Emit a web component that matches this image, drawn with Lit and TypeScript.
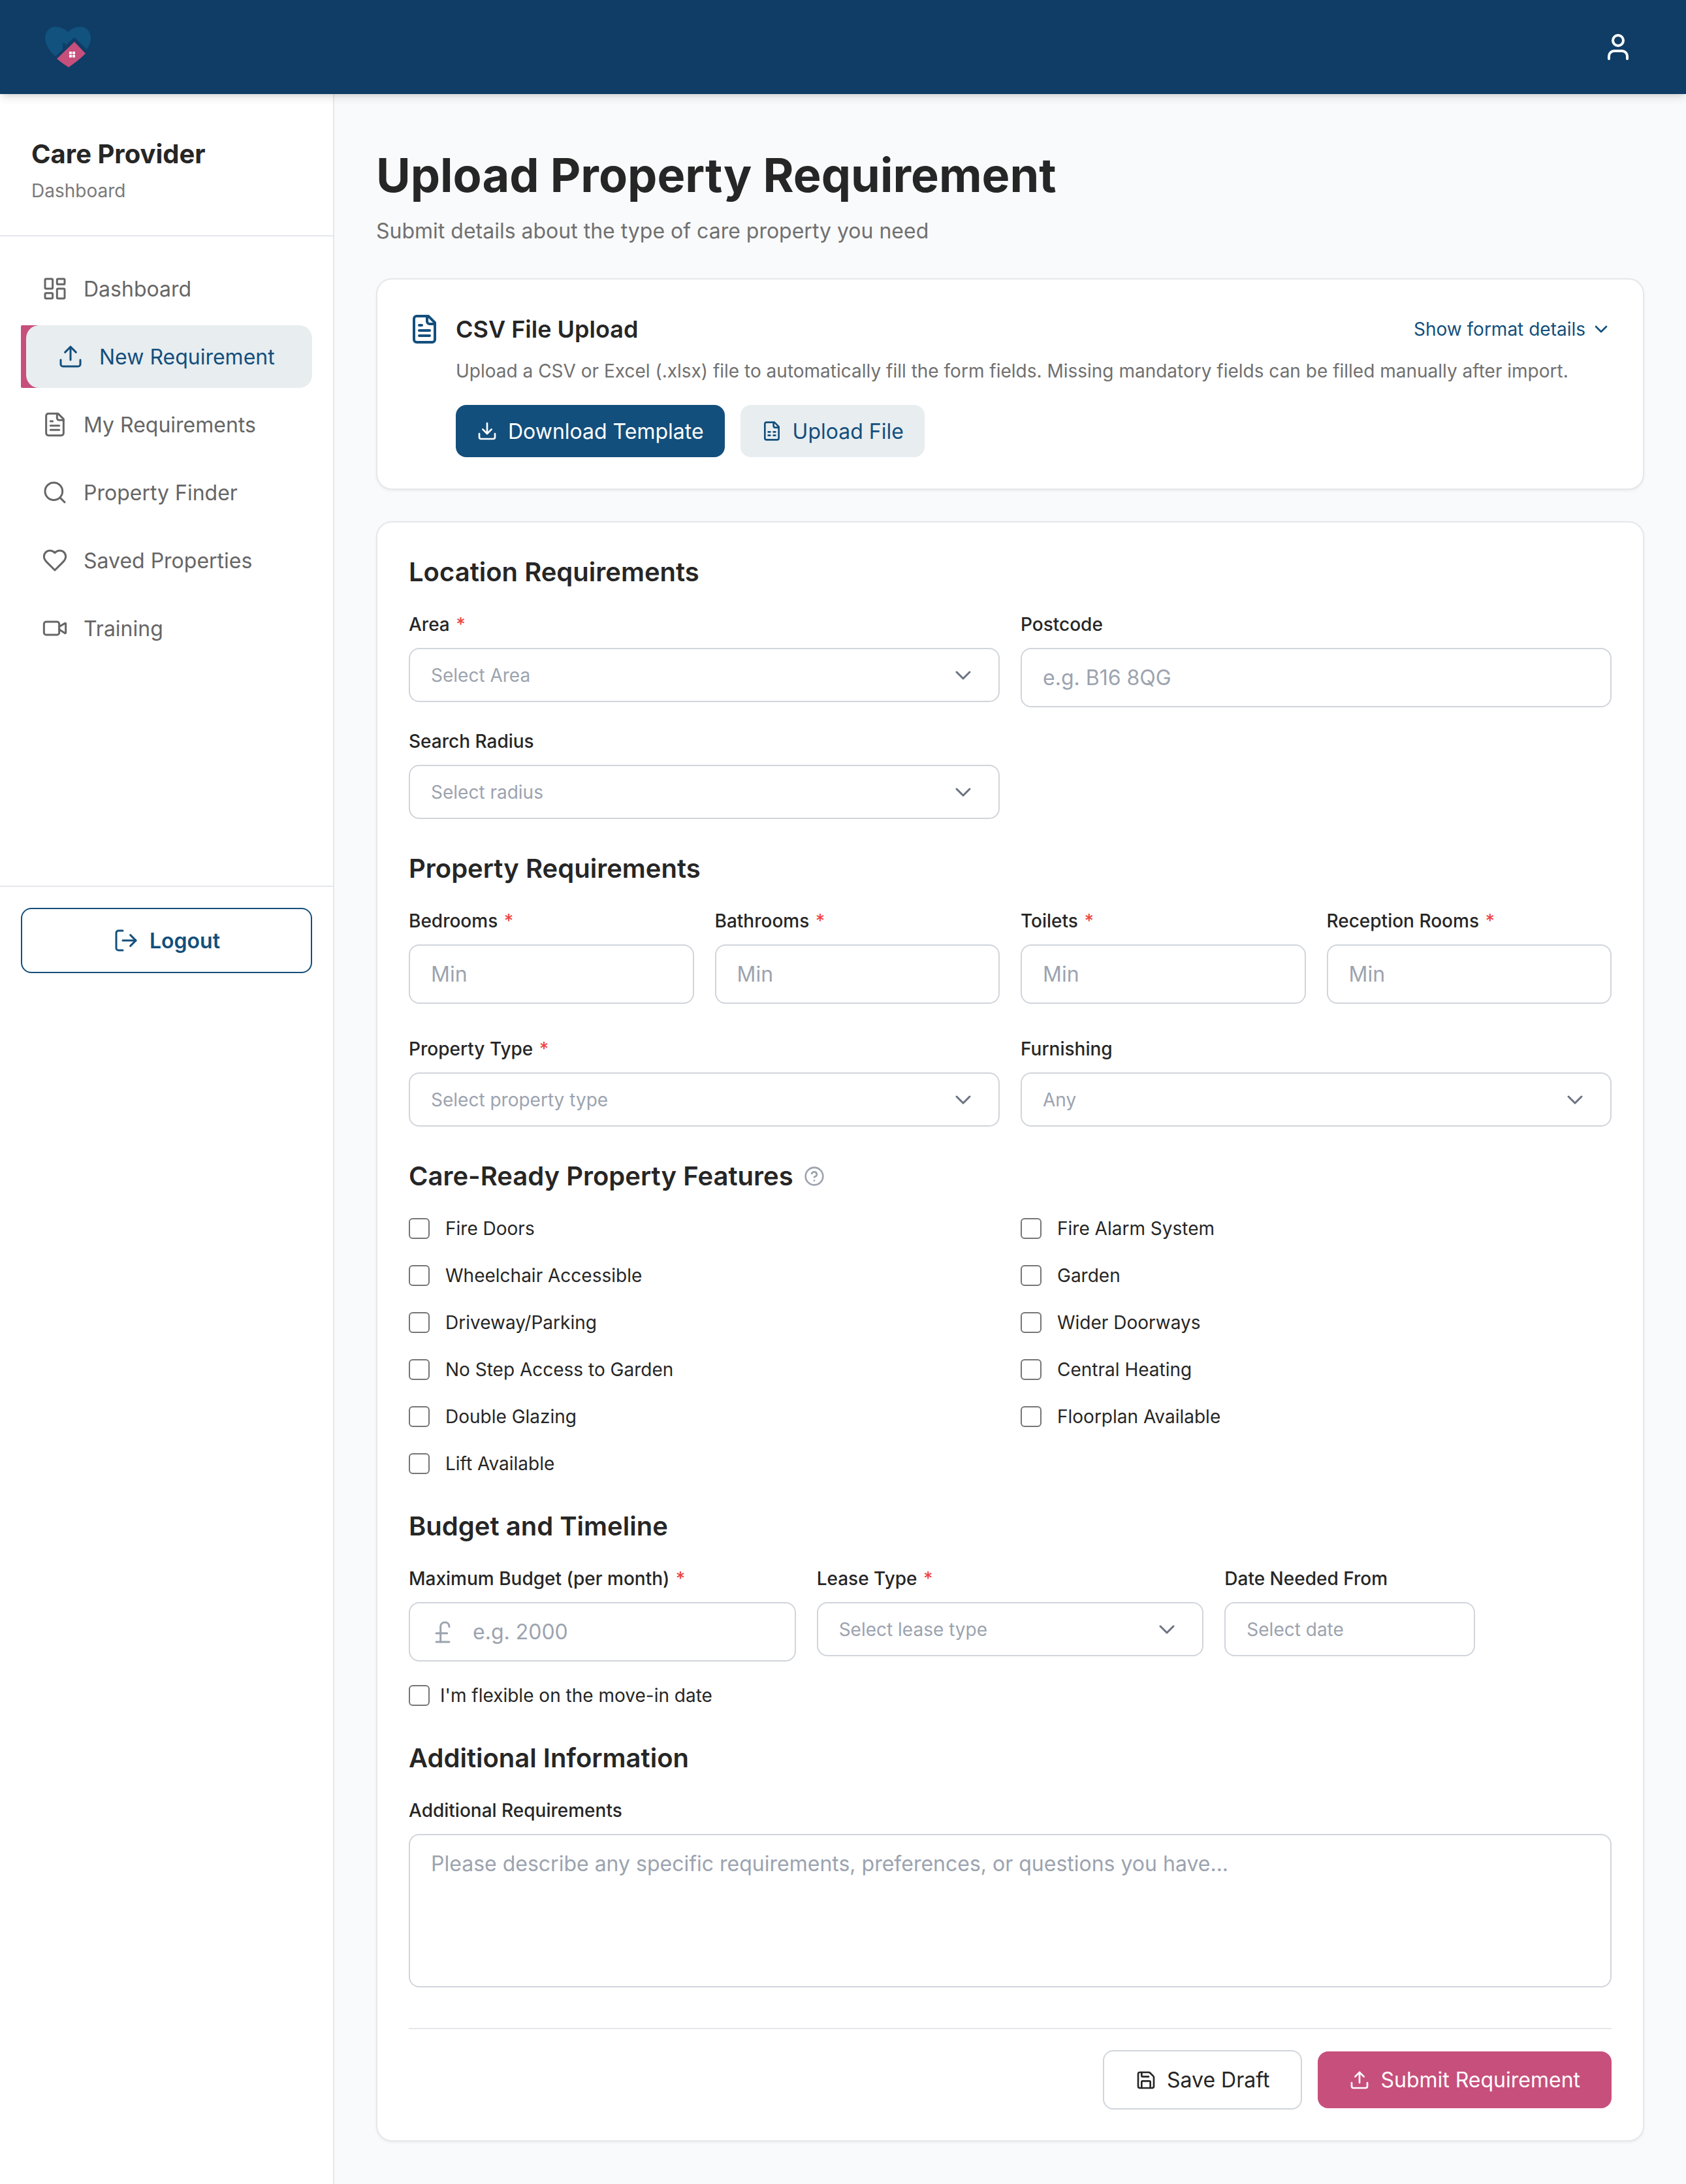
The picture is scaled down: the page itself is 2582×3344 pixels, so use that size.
import { LitElement, html, svg, css } from 'lit';
import { customElement } from 'lit/decorators.js';

// Lucide style icon bodies
const ICONS = {
  dashboard: svg`<rect width="7" height="9" x="3" y="3" rx="1"/><rect width="7" height="5" x="14" y="3" rx="1"/><rect width="7" height="9" x="14" y="12" rx="1"/><rect width="7" height="5" x="3" y="16" rx="1"/>`,
  upload: svg`<path d="M21 15v4a2 2 0 0 1-2 2H5a2 2 0 0 1-2-2v-4"/><polyline points="17 8 12 3 7 8"/><line x1="12" x2="12" y1="3" y2="15"/>`,
  download: svg`<path d="M21 15v4a2 2 0 0 1-2 2H5a2 2 0 0 1-2-2v-4"/><polyline points="7 10 12 15 17 10"/><line x1="12" x2="12" y1="15" y2="3"/>`,
  file: svg`<path d="M15 2H6a2 2 0 0 0-2 2v16a2 2 0 0 0 2 2h12a2 2 0 0 0 2-2V7Z"/><path d="M14 2v4a2 2 0 0 0 2 2h4"/><path d="M10 9H8"/><path d="M16 13H8"/><path d="M16 17H8"/>`,
  sheet: svg`<path d="M15 2H6a2 2 0 0 0-2 2v16a2 2 0 0 0 2 2h12a2 2 0 0 0 2-2V7Z"/><path d="M14 2v4a2 2 0 0 0 2 2h4"/><path d="M8 13h2"/><path d="M14 13h2"/><path d="M8 17h2"/><path d="M14 17h2"/>`,
  search: svg`<circle cx="11" cy="11" r="8"/><path d="m21 21-4.3-4.3"/>`,
  heart: svg`<path d="M19 14c1.49-1.46 3-3.21 3-5.5A5.5 5.5 0 0 0 16.5 3c-1.76 0-3 .5-4.5 2-1.5-1.5-2.74-2-4.5-2A5.5 5.5 0 0 0 2 8.5c0 2.3 1.5 4.05 3 5.5l7 7Z"/>`,
  video: svg`<path d="m16 13 5.223 3.482a.5.5 0 0 0 .777-.416V7.87a.5.5 0 0 0-.752-.432L16 10.5"/><rect x="2" y="6" width="14" height="12" rx="2"/>`,
  user: svg`<path d="M19 21v-2a4 4 0 0 0-4-4H9a4 4 0 0 0-4 4v2"/><circle cx="12" cy="7" r="4"/>`,
  logout: svg`<path d="M9 21H5a2 2 0 0 1-2-2V5a2 2 0 0 1 2-2h4"/><polyline points="16 17 21 12 16 7"/><line x1="21" x2="9" y1="12" y2="12"/>`,
  chevron: svg`<path d="m6 9 6 6 6-6"/>`,
  help: svg`<circle cx="12" cy="12" r="10"/><path d="M9.09 9a3 3 0 0 1 5.83 1c0 2-3 3-3 3"/><path d="M12 17h.01"/>`,
  pound: svg`<path d="M18 7c0-5.333-8-5.333-8 0"/><path d="M10 7v14"/><path d="M6 21h12"/><path d="M6 13h10"/>`,
  save: svg`<path d="M15.2 3a2 2 0 0 1 1.4.6l3.8 3.8a2 2 0 0 1 .6 1.4V19a2 2 0 0 1-2 2H5a2 2 0 0 1-2-2V5a2 2 0 0 1 2-2z"/><path d="M17 21v-7a1 1 0 0 0-1-1H8a1 1 0 0 0-1 1v7"/><path d="M7 3v4a1 1 0 0 0 1 1h7"/>`,
};

type IconName = keyof typeof ICONS;

const icon = (name: IconName, cls = '') => html`<svg class="icon ${cls}" viewBox="0 0 24 24" fill="none" stroke="currentColor" stroke-linecap="round" stroke-linejoin="round">${ICONS[name]}</svg>`;

const NAV: { label: string; icon: IconName; active?: boolean }[] = [
  { label: 'Dashboard', icon: 'dashboard' },
  { label: 'New Requirement', icon: 'upload', active: true },
  { label: 'My Requirements', icon: 'file' },
  { label: 'Property Finder', icon: 'search' },
  { label: 'Saved Properties', icon: 'heart' },
  { label: 'Training', icon: 'video' },
];

const FEATURES = [
  'Fire Doors', 'Fire Alarm System',
  'Wheelchair Accessible', 'Garden',
  'Driveway/Parking', 'Wider Doorways',
  'No Step Access to Garden', 'Central Heating',
  'Double Glazing', 'Floorplan Available',
  'Lift Available',
];

@customElement('app-root')
export class AppRoot extends LitElement {
  static styles = css`
    :host {
      display: block;
      zoom: 2;
      font-family: Inter, 'Liberation Sans', sans-serif;
      color: #262626;
      background: #f9fafb;
    }
    * { box-sizing: border-box; }
    .icon { width: 20px; height: 20px; stroke-width: 1.8; flex: none; display: block; }

    .topbar {
      height: 72px;
      background: #0f3d66;
      color: #fff;
      display: flex;
      align-items: center;
      justify-content: space-between;
      padding: 0 40px 0 34.5px;
      box-shadow: 0 4px 6px -1px rgba(0, 0, 0, .1), 0 2px 4px -2px rgba(0, 0, 0, .1);
      position: relative;
      z-index: 2;
    }
    .logo { width: 35px; height: 31px; display: block; }
    .user { width: 24px; height: 24px; stroke-width: 2; }

    .layout { display: flex; min-height: 1600px; }

    .sidebar { width: 256px; flex: none; background: #fff; border-right: 1px solid #e5e7eb; }
    .side-head { padding: 32px 24px 24px; border-bottom: 1px solid #e5e7eb; }
    .side-title { font-size: 20px; line-height: 28px; font-weight: 700; }
    .side-sub { font-size: 14px; line-height: 20px; color: #7a7a7a; margin-top: 4px; }
    .nav { height: 498px; padding: 16px 16px 0; display: flex; flex-direction: column; gap: 4px; border-bottom: 1px solid #e5e7eb; isolation: isolate; }
    .nav-item {
      height: 48px;
      display: flex;
      align-items: center;
      gap: 12px;
      padding-left: 16px;
      font-size: 16px;
      color: #666;
      border-radius: 10px;
    }
    .nav-item.active {
      position: relative;
      margin-left: 4px;
      background: #e8edf0;
      color: #134f7c;
      padding-left: 24px;
    }
    /* pink bar sits under the grey pill so its rounded corners show through */
    .nav-item.active::before {
      content: '';
      position: absolute;
      left: -4px;
      top: 0;
      bottom: 0;
      width: 14px;
      background: #c74f7b;
      border-radius: 1px 0 0 1px;
      z-index: -1;
    }
    .logout-wrap { padding: 16px; }
    .logout {
      height: 50px;
      display: flex;
      align-items: center;
      justify-content: center;
      gap: 8px;
      border: 1px solid #134f7c;
      border-radius: 8px;
      background: #fff;
      color: #134f7c;
      font-size: 16px;
      font-weight: 600;
    }

    .main { flex: 1; min-width: 0; padding: 42px 32px 32px; }
    h1 { margin: 0; font-size: 36px; line-height: 40px; font-weight: 700; }
    .sub { font-size: 16px; line-height: 24px; color: #707070; margin-top: 11px; }
    .card {
      background: #fff;
      border: 1px solid #e5e7eb;
      border-radius: 12px;
      box-shadow: 0 1px 2px rgba(0, 0, 0, .05);
    }

    .csv { margin-top: 24px; padding: 24px; display: flex; gap: 12px; }
    .csv-icon { width: 24px; height: 24px; stroke-width: 2; color: #134f7c; margin-top: 2px; }
    .csv-body { flex: 1; min-width: 0; }
    .csv-top { display: flex; align-items: center; justify-content: space-between; height: 28px; }
    .csv-title { font-size: 18px; font-weight: 600; }
    .format { display: flex; align-items: center; gap: 4px; font-size: 14px; color: #134f7c; }
    .format .icon { width: 16px; height: 16px; stroke-width: 2; }
    .csv-desc { font-size: 14px; line-height: 20px; color: #707070; margin-top: 8px; }
    .csv-actions { display: flex; gap: 12px; margin-top: 16px; }
    .btn {
      display: flex;
      align-items: center;
      gap: 8px;
      height: 40px;
      padding: 0 16px;
      border-radius: 8px;
      font-size: 16px;
      white-space: nowrap;
    }
    .btn .icon { width: 16px; height: 16px; stroke-width: 2; }
    .btn.primary { background: #134f7c; color: #fff; }
    .btn.secondary { background: #e8edf0; color: #134f7c; }

    .form { margin-top: 24px; padding: 24px 24px 23.5px; }
    h2 { margin: 0; font-size: 20px; line-height: 28px; font-weight: 600; display: flex; align-items: center; gap: 8px; }
    h2 .icon { width: 16px; height: 16px; color: #9ca3af; stroke-width: 2; }
    .section { margin-top: 24px; }
    .row { display: grid; gap: 16px; margin-top: 16px; }
    .row.wide { margin-top: 24.5px; }
    .two { grid-template-columns: 1fr 1fr; }
    .three { grid-template-columns: 1fr 1fr 1fr; }
    .four { grid-template-columns: repeat(4, 1fr); }
    .field { min-width: 0; }
    .date { width: 192px; }
    .label { display: block; font-size: 14px; line-height: 20px; font-weight: 550; margin-bottom: 8px; color: #262626; }
    .req { color: #ef4444; margin-left: 1px; }
    input.text, textarea {
      display: block;
      width: 100%;
      height: 45.5px;
      padding: 0 16px;
      border: 1px solid #d1d5db;
      border-radius: 8px;
      background: #fff;
      font: 16px Inter, 'Liberation Sans', sans-serif;
      outline: none;
    }
    input.text::placeholder, textarea::placeholder { color: #9ca3af; opacity: 1; }
    textarea { height: 117.5px; padding: 10px 16px; line-height: 24px; resize: none; }
    .select {
      height: 41.5px;
      display: flex;
      align-items: center;
      justify-content: space-between;
      padding: 0 17px 0 16px;
      border: 1px solid #d1d5db;
      border-radius: 8px;
      background: #fff;
      font-size: 14px;
      color: #9ca3af;
    }
    .select .icon { color: #6b7280; stroke-width: 1.8; }
    .money { position: relative; }
    .money .icon { position: absolute; left: 16px; top: 13px; color: #9ca3af; }
    .money input.text { padding-left: 48px; }

    .checks { display: grid; grid-template-columns: 1fr 1fr; column-gap: 16px; row-gap: 16px; margin-top: 16px; }
    .check { display: flex; align-items: center; gap: 12px; font-size: 14px; line-height: 20px; }
    input[type='checkbox'] {
      appearance: none;
      width: 16px;
      height: 16px;
      margin: 0;
      flex: none;
      border: 1px solid #767676;
      border-radius: 3px;
      background: #fff;
    }
    .check.flex-row { gap: 8px; margin-top: 16px; }

    .actions {
      display: flex;
      justify-content: flex-end;
      align-items: center;
      gap: 12px;
      margin-top: 31px;
      padding-top: 16px;
      border-top: 1px solid #e5e7eb;
    }
    .actions .btn { height: 43.5px; padding: 0 24px; }
    .btn.ghost { background: #fff; border: 1px solid #d1d5db; color: #262626; }
    .actions .btn.ghost { height: 45.5px; }
    .btn.submit { background: #c74f7b; color: #fff; }
  `;

  private _select(text: string) {
    return html`<div class="select"><span>${text}</span>${icon('chevron')}</div>`;
  }

  private _label(text: string, required = false) {
    return html`<div class="label">${text}${required ? html` <span class="req">*</span>` : ''}</div>`;
  }

  private _logo() {
    return svg`<svg class="logo" viewBox="0 0 70 62">
      <path fill="#11527f" d="M35 8C28 1 20 0 15 0 6 0 0 8 0 18c0 13 14 28 35 44 21-16 35-31 35-44C70 8 64 0 55 0 50 0 42 1 35 8Z"/>
      <path fill="#0f3d66" d="M45 16 70 41 70 62 0 62 0 46 12 49 27 35 27 25 31 25 31 29Z"/>
      <path fill="#c74f7b" d="M45 23 62 41C54 49 45 56 36 62 30 58 24 54 18 49Z"/>
      <g fill="#fff"><rect x="37" y="38" width="4" height="4"/><rect x="42" y="38" width="4" height="4"/><rect x="37" y="43" width="4" height="4"/><rect x="42" y="43" width="4" height="4"/></g>
    </svg>`;
  }

  private _sidebar() {
    return html`
      <aside class="sidebar">
        <div class="side-head">
          <div class="side-title">Care Provider</div>
          <div class="side-sub">Dashboard</div>
        </div>
        <nav class="nav">
          ${NAV.map(n => html`<div class="nav-item ${n.active ? 'active' : ''}">${icon(n.icon)}<span>${n.label}</span></div>`)}
        </nav>
        <div class="logout-wrap">
          <div class="logout">${icon('logout')}<span>Logout</span></div>
        </div>
      </aside>
    `;
  }

  private _csvCard() {
    return html`
      <section class="card csv">
        ${icon('file', 'csv-icon')}
        <div class="csv-body">
          <div class="csv-top">
            <div class="csv-title">CSV File Upload</div>
            <div class="format"><span>Show format details</span>${icon('chevron')}</div>
          </div>
          <div class="csv-desc">Upload a CSV or Excel (.xlsx) file to automatically fill the form fields. Missing mandatory fields can be filled manually after import.</div>
          <div class="csv-actions">
            <div class="btn primary">${icon('download')}<span>Download Template</span></div>
            <div class="btn secondary">${icon('sheet')}<span>Upload File</span></div>
          </div>
        </div>
      </section>
    `;
  }

  private _form() {
    return html`
      <section class="card form">
        <h2>Location Requirements</h2>
        <div class="row two">
          <div class="field">${this._label('Area', true)}${this._select('Select Area')}</div>
          <div class="field">${this._label('Postcode')}<input class="text" placeholder="e.g. B16 8QG" /></div>
        </div>
        <div class="row two">
          <div class="field">${this._label('Search Radius')}${this._select('Select radius')}</div>
        </div>

        <h2 class="section">Property Requirements</h2>
        <div class="row four">
          ${['Bedrooms', 'Bathrooms', 'Toilets', 'Reception Rooms'].map(l => html`
            <div class="field">${this._label(l, true)}<input class="text" placeholder="Min" /></div>
          `)}
        </div>
        <div class="row two wide">
          <div class="field">${this._label('Property Type', true)}${this._select('Select property type')}</div>
          <div class="field">${this._label('Furnishing')}${this._select('Any')}</div>
        </div>

        <h2 class="section">Care-Ready Property Features ${icon('help')}</h2>
        <div class="checks">
          ${FEATURES.map(f => html`<div class="check"><input type="checkbox" /><span>${f}</span></div>`)}
        </div>

        <h2 class="section">Budget and Timeline</h2>
        <div class="row three">
          <div class="field">
            ${this._label('Maximum Budget (per month)', true)}
            <div class="money">${icon('pound')}<input class="text" placeholder="e.g. 2000" /></div>
          </div>
          <div class="field">${this._label('Lease Type', true)}${this._select('Select lease type')}</div>
          <div class="field date">${this._label('Date Needed From')}<div class="select"><span>Select date</span></div></div>
        </div>
        <div class="check flex-row"><input type="checkbox" /><span>I'm flexible on the move-in date</span></div>

        <h2 class="section">Additional Information</h2>
        <div class="row">
          <div class="field">${this._label('Additional Requirements')}<textarea placeholder="Please describe any specific requirements, preferences, or questions you have..."></textarea></div>
        </div>

        <div class="actions">
          <div class="btn ghost">${icon('save')}<span>Save Draft</span></div>
          <div class="btn submit">${icon('upload')}<span>Submit Requirement</span></div>
        </div>
      </section>
    `;
  }

  render() {
    return html`
      <header class="topbar">
        ${this._logo()}
        ${icon('user', 'user')}
      </header>
      <div class="layout">
        ${this._sidebar()}
        <main class="main">
          <h1>Upload Property Requirement</h1>
          <div class="sub">Submit details about the type of care property you need</div>
          ${this._csvCard()}
          ${this._form()}
        </main>
      </div>
    `;
  }
}

declare global {
  interface HTMLElementTagNameMap {
    'app-root': AppRoot;
  }
}
